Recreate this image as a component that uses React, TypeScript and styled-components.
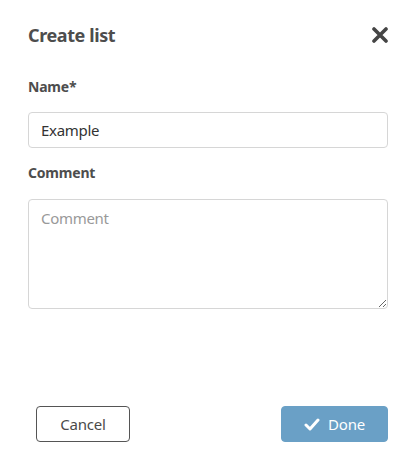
import React from 'react';
import styled, { createGlobalStyle } from 'styled-components';

const GlobalStyle = createGlobalStyle`
  html, body {
    margin: 0;
    padding: 0;
    background: #fff;
  }
  body {
    font-family: 'Noto Sans', 'Open Sans', Arial, sans-serif;
    color: #4a4a4a;
  }
  * {
    box-sizing: border-box;
  }
`;

const Dialog = styled.div`
  width: 419px;
  height: 464px;
  padding: 22px 31px 22px 28px;
  display: flex;
  flex-direction: column;
  background: #fff;
`;

const Header = styled.div`
  display: flex;
  justify-content: space-between;
  align-items: center;
  height: 26px;
`;

const Title = styled.h2`
  margin: 0;
  font-size: 18px;
  font-weight: 700;
  color: #4d4d4d;
  letter-spacing: -0.4px;
`;

const CloseButton = styled.button`
  border: 0;
  background: none;
  padding: 0;
  width: 16px;
  height: 16px;
  display: flex;
  cursor: pointer;
`;

const Field = styled.div<{ $top: number }>`
  display: flex;
  flex-direction: column;
  margin-top: ${(p) => p.$top}px;
`;

const Label = styled.label`
  font-size: 14px;
  font-weight: 700;
  color: #4d4d4d;
  line-height: 18px;
  margin-bottom: 16px;
  letter-spacing: -0.2px;
`;

const Input = styled.input`
  width: 360px;
  height: 36px;
  border: 1px solid #d6d6d6;
  border-radius: 4px;
  padding: 0 12px;
  font-family: inherit;
  font-size: 15px;
  letter-spacing: -0.3px;
  color: #333;
  outline: none;
`;

const TextArea = styled.textarea`
  width: 360px;
  height: 110px;
  margin-top: 1px;
  border: 1px solid #d6d6d6;
  border-radius: 4px;
  padding: 8px 12px;
  font-family: inherit;
  font-size: 15px;
  letter-spacing: -0.3px;
  color: #333;
  outline: none;
  resize: vertical;
  &::placeholder {
    color: #999;
  }
`;

const Footer = styled.div`
  margin-top: auto;
  display: flex;
  justify-content: space-between;
  align-items: center;
  padding-left: 8px;
`;

const Button = styled.button<{ $primary?: boolean }>`
  height: 36px;
  width: ${(p) => (p.$primary ? 107 : 94)}px;
  border-radius: 4px;
  font-family: inherit;
  font-size: 15px;
  letter-spacing: -0.2px;
  display: flex;
  align-items: center;
  justify-content: center;
  gap: 8px;
  cursor: pointer;
  border: 1px solid ${(p) => (p.$primary ? '#6aa0c6' : '#555')};
  background: ${(p) => (p.$primary ? '#6aa0c6' : '#fff')};
  color: ${(p) => (p.$primary ? '#fff' : '#4a4a4a')};
`;

const XIcon = () => (
  <svg width="16" height="16" viewBox="0 0 16 16">
    <path d="M2 2 L14 14 M14 2 L2 14" stroke="#454545" strokeWidth="3.6" strokeLinecap="round" />
  </svg>
);

const CheckIcon = () => (
  <svg width="16" height="13" viewBox="0 0 16 13">
    <path d="M2 7 L6 11 L14 2" stroke="#fff" strokeWidth="3" fill="none" strokeLinecap="round" strokeLinejoin="round" />
  </svg>
);

export default function App() {
  return (
    <>
      <GlobalStyle />
      <Dialog>
        <Header>
          <Title>Create list</Title>
          <CloseButton aria-label="Close">
            <XIcon />
          </CloseButton>
        </Header>
        <Field $top={30}>
          <Label>Name*</Label>
          <Input defaultValue="Example" />
        </Field>
        <Field $top={16}>
          <Label>Comment</Label>
          <TextArea placeholder="Comment" />
        </Field>
        <Footer>
          <Button>Cancel</Button>
          <Button $primary>
            <CheckIcon />
            Done
          </Button>
        </Footer>
      </Dialog>
    </>
  );
}
